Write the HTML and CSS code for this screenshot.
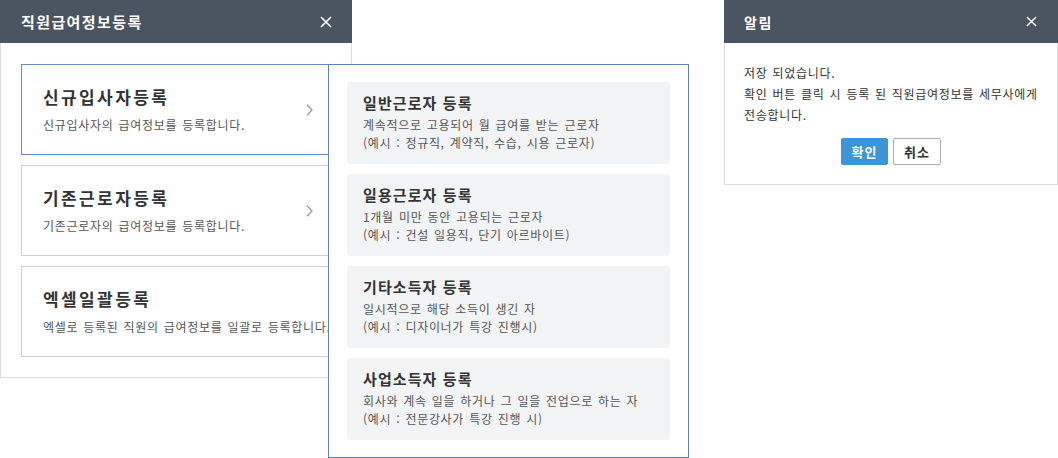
FILE: index.html
```html
<!DOCTYPE html>
<html lang="ko">
<head>
<meta charset="utf-8">
<title>직원급여정보등록</title>
<link rel="stylesheet" href="styles.css">
</head>
<body>
<div class="desk">
  <section class="dialog dialog-main">
    <header class="dlg-head">
      <h1 class="dlg-title">직원급여정보등록</h1>
      <svg class="close" viewBox="0 0 12 12" width="12" height="12"><path d="M1 1L11 11M11 1L1 11" stroke="#fff" stroke-width="1.6" fill="none"/></svg>
    </header>
    <div class="dlg-body cards">
      <div class="card card-active">
        <div class="card-text">
          <h2 class="card-title">신규입사자등록</h2>
          <p class="card-desc">신규입사자의 급여정보를 등록합니다.</p>
        </div>
        <svg class="chev" viewBox="0 0 7 12" width="7" height="12"><path d="M1 0.8L6 6L1 11.2" stroke="#9a9a9a" stroke-width="1.3" fill="none"/></svg>
      </div>
      <div class="card">
        <div class="card-text">
          <h2 class="card-title">기존근로자등록</h2>
          <p class="card-desc">기존근로자의 급여정보를 등록합니다.</p>
        </div>
        <svg class="chev" viewBox="0 0 7 12" width="7" height="12"><path d="M1 0.8L6 6L1 11.2" stroke="#9a9a9a" stroke-width="1.3" fill="none"/></svg>
      </div>
      <div class="card">
        <div class="card-text">
          <h2 class="card-title">엑셀일괄등록</h2>
          <p class="card-desc nowrap">엑셀로 등록된 직원의 급여정보를 일괄로 등록합니다.</p>
        </div>
      </div>
    </div>
  </section>

  <section class="popup">
    <div class="pop-item">
      <h3 class="pop-title">일반근로자 등록</h3>
      <p class="pop-desc">계속적으로 고용되어 월 급여를 받는 근로자<br>(예시 : 정규직, 계약직, 수습, 시용 근로자)</p>
    </div>
    <div class="pop-item">
      <h3 class="pop-title">일용근로자 등록</h3>
      <p class="pop-desc">1개월 미만 동안 고용되는 근로자<br>(예시 : 건설 일용직, 단기 아르바이트)</p>
    </div>
    <div class="pop-item">
      <h3 class="pop-title">기타소득자 등록</h3>
      <p class="pop-desc">일시적으로 해당 소득이 생긴 자<br>(예시 : 디자이너가 특강 진행시)</p>
    </div>
    <div class="pop-item">
      <h3 class="pop-title">사업소득자 등록</h3>
      <p class="pop-desc">회사와 계속 일을 하거나 그 일을 전업으로 하는 자<br>(예시 : 전문강사가 특강 진행 시)</p>
    </div>
  </section>

  <section class="dialog dialog-alert">
    <header class="dlg-head alert-head">
      <h1 class="dlg-title alert-title">알림</h1>
      <svg class="close" viewBox="0 0 12 12" width="11" height="11"><path d="M1 1L11 11M11 1L1 11" stroke="#fff" stroke-width="1.6" fill="none"/></svg>
    </header>
    <div class="alert-body">
      <p class="alert-msg">저장 되었습니다.<br>확인 버튼 클릭 시 등록 된 직원급여정보를 세무사에게<br>전송합니다.</p>
      <div class="btns">
        <button class="btn btn-primary">확인</button>
        <button class="btn btn-default">취소</button>
      </div>
    </div>
  </section>
</div>
</body>
</html>
```

FILE: styles.css
```css
* { box-sizing: border-box; margin: 0; padding: 0; }
html, body { background: #fff; }
body {
  font-family: "Noto Sans CJK KR", "Noto Sans", sans-serif;
  color: #333;
  width: 1058px;
  height: 458px;
  overflow: hidden;
}
.desk { position: relative; width: 1058px; height: 458px; }

.dialog {
  position: absolute;
  top: 0;
  background: #fff;
  border: 1px solid #dcdcdc;
  border-top: none;
}
.dialog-main { left: 0; width: 352px; height: 378px; }
.dialog-alert { left: 724px; width: 334px; height: 185px; }

.dlg-head {
  height: 43px;
  background: #4b5461;
  display: flex;
  align-items: center;
  justify-content: space-between;
  padding: 0 20px 0 21px;
  margin: 0 -1px;
}
.dlg-title {
  color: #fff;
  font-size: 15px;
  font-weight: 700;
  line-height: 20px;
  letter-spacing: 1.4px;
}
.alert-head { padding: 0 21px 0 20px; }
.alert-title { font-size: 14px; letter-spacing: 1.5px; }
.close { display: block; }

.cards {
  padding: 21px 20px 20px 20px;
  display: flex;
  flex-direction: column;
  gap: 10px;
}
.card {
  height: 91px;
  border: 1px solid #cfcfcf;
  display: flex;
  align-items: center;
  justify-content: space-between;
  padding: 0 17px 0 21px;
}
.card-active { border-color: #6a8bbd; }
.card-text { display: flex; flex-direction: column; gap: 9px; margin-top: 2px; }
.card-title {
  font-size: 17px;
  font-weight: 700;
  line-height: 20px;
  letter-spacing: 2.4px;
  color: #333;
}
.card-desc {
  font-size: 12px;
  line-height: 18px;
  color: #555;
  font-weight: 400;
  letter-spacing: 0.7px;
  word-spacing: 1px;
}
.nowrap { white-space: nowrap; }
.chev { display: block; flex: none; }

.popup {
  position: absolute;
  left: 328px;
  top: 64px;
  width: 361px;
  height: 394px;
  background: #fff;
  border: 1px solid #5c82b8;
  padding: 17px 18px 0 18px;
  display: flex;
  flex-direction: column;
  gap: 10px;
}
.pop-item {
  height: 82px;
  background: #f2f3f5;
  border-radius: 3px;
  padding: 11px 16px 0 16px;
}
.pop-title {
  font-size: 15px;
  font-weight: 700;
  line-height: 20px;
  color: #333;
  margin-bottom: 3px;
  letter-spacing: 1.1px;
}
.pop-desc {
  font-size: 12px;
  line-height: 18px;
  color: #555;
  letter-spacing: 0.7px;
  word-spacing: 1px;
}

.alert-body {
  padding: 19px 19px 0 19px;
}
.alert-msg {
  font-size: 12px;
  line-height: 21px;
  color: #333;
  letter-spacing: 0.7px;
  word-spacing: 1px;
  white-space: nowrap;
}
.btns {
  display: flex;
  justify-content: center;
  gap: 5px;
  margin-top: 13px;
}
.btn {
  font-family: "Noto Sans CJK KR", "Noto Sans", sans-serif;
  font-size: 13px;
  font-weight: 700;
  height: 27px;
  width: 47px;
  border-radius: 2px;
  line-height: 25px;
  letter-spacing: 1px;
  cursor: pointer;
}
.btn-primary { background: #3b96d9; color: #fff; border: 1px solid #3b96d9; }
.btn-default { background: #fff; color: #333; border: 1px solid #ababab; width: 48px; }
```
